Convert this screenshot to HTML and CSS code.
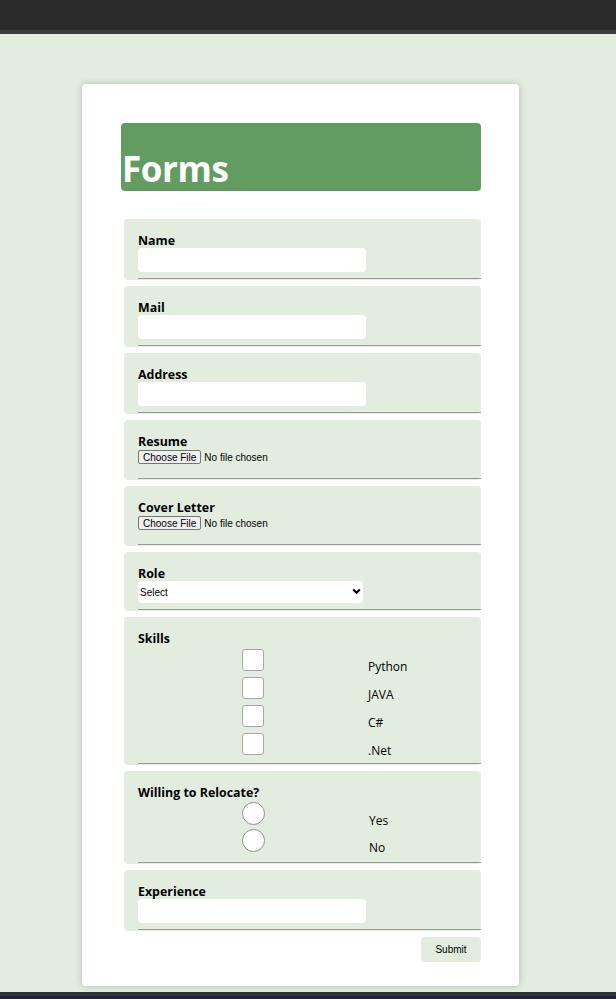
FILE: index.html
```html
<!DOCTYPE html>
<html lang="en">
<head>
<meta charset="utf-8">
<title>Forms</title>
<link rel="stylesheet" href="styles.css">
</head>
<body>
<div class="topbar"></div>
<div class="topstripe"></div>
<main class="page">
  <div class="card">
    <header class="banner"><h1>Forms</h1></header>
    <form class="form">
      <section class="box">
        <div class="field">
          <label class="lbl">Name</label>
          <input class="text" type="text">
        </div>
      </section>
      <section class="box">
        <div class="field">
          <label class="lbl">Mail</label>
          <input class="text" type="text">
        </div>
      </section>
      <section class="box">
        <div class="field">
          <label class="lbl">Address</label>
          <input class="text" type="text">
        </div>
      </section>
      <section class="box">
        <div class="field field-file">
          <label class="lbl">Resume</label>
          <input class="file" type="file">
        </div>
      </section>
      <section class="box">
        <div class="field field-file">
          <label class="lbl">Cover Letter</label>
          <input class="file" type="file">
        </div>
      </section>
      <section class="box">
        <div class="field">
          <label class="lbl">Role</label>
          <div class="select-wrap">
            <select class="select"><option>Select</option></select>
            <svg class="chev" width="9" height="7" viewBox="0 0 9 7"><path d="M1.2 1.5 L4.5 4.8 L7.8 1.5" fill="none" stroke="#000" stroke-width="2.2"/></svg>
          </div>
        </div>
      </section>
      <section class="box">
        <div class="field field-checks">
          <label class="lbl">Skills</label>
          <div class="choices">
            <span class="cell"><input class="check" type="checkbox"></span><span class="opt">Python</span>
            <span class="cell"><input class="check" type="checkbox"></span><span class="opt">JAVA</span>
            <span class="cell"><input class="check" type="checkbox"></span><span class="opt">C#</span>
            <span class="cell"><input class="check" type="checkbox"></span><span class="opt">.Net</span>
          </div>
        </div>
      </section>
      <section class="box">
        <div class="field field-radios">
          <label class="lbl">Willing to Relocate?</label>
          <div class="choices radios">
            <span class="cell"><input class="radio" type="radio" name="r"></span><span class="opt">Yes</span>
            <span class="cell"><input class="radio" type="radio" name="r"></span><span class="opt">No</span>
          </div>
        </div>
      </section>
      <section class="box">
        <div class="field">
          <label class="lbl">Experience</label>
          <input class="text" type="text">
        </div>
      </section>
      <div class="actions"><button class="submit" type="button">Submit</button></div>
    </form>
  </div>
</main>
<div class="botstripe"></div>
<div class="botbar"></div>
</body>
</html>
```
FILE: styles.css
```css
html, body {
  margin: 0;
  padding: 0;
  height: 999px;
  overflow: hidden;
}
body {
  font-family: "Open Sans", "DejaVu Sans", sans-serif;
  background: #e2ede0;
}
.topbar { height: 30px; background: #2b2b2b; }
.topstripe { height: 4px; background: #3b3b3b; }
.page {
  height: 958px;
  box-sizing: border-box;
  padding-top: 50px;
  background: #e2ede0;
}
.card {
  margin-left: 82px;
  width: 437px;
  height: 902px;
  box-sizing: border-box;
  padding: 39px 38px 0 39px;
  background: #fff;
  border-radius: 4px;
  box-shadow: 0 0 7px rgba(0, 0, 0, 0.22);
}
.banner {
  height: 68px;
  background: #639c61;
  border-radius: 4px;
  display: flex;
  align-items: flex-end;
}
.banner h1 {
  margin: 0 0 4px 1px;
  font-size: 35px;
  line-height: 36px;
  letter-spacing: -0.4px;
  font-weight: 700;
  color: #fff;
}
.form {
  margin: 28px 0 0 3px;
  display: flex;
  flex-direction: column;
  gap: 6px;
}
.box {
  background: #e2ede0;
  border-radius: 4px;
  padding: 14px 0 1px 14px;
}
.field {
  box-sizing: border-box;
  padding-bottom: 6px;
  border-bottom: 1px solid #9a9a9a;
  display: flex;
  flex-direction: column;
  align-items: flex-start;
}
.field-file { min-height: 45px; }
.field-checks { padding-bottom: 5px; }
.field-radios { padding-bottom: 8px; }
.lbl {
  display: block;
  font-size: 12.4px;
  line-height: 15px;
  font-weight: 700;
  color: #000;
}
.text {
  width: 228px;
  height: 24px;
  box-sizing: border-box;
  border: none;
  border-radius: 4px;
  background: #fff;
  margin: 0;
  padding: 0 6px;
}
.file {
  margin: 0;
  font-family: "Liberation Sans", Arial, sans-serif;
  font-size: 10px;
  color: #000;
  height: 15px;
}
.file::file-selector-button {
  font-family: "Liberation Sans", Arial, sans-serif;
  font-size: 10px;
  height: 14px;
  padding: 0 4px;
  margin: 1px 3px 0 0;
  border: 1px solid #767676;
  border-radius: 2px;
  background: #efefef;
  color: #000;
}
.select-wrap {
  position: relative;
  width: 225px;
  height: 22px;
}
.select {
  display: block;
  -webkit-appearance: none;
  appearance: none;
  width: 225px;
  height: 22px;
  margin: 0;
  border: none;
  border-radius: 4px;
  background: #fff;
  font-family: "Liberation Sans", Arial, sans-serif;
  font-size: 10px;
  color: #000;
  padding: 0 0 0 2px;
}
.chev {
  position: absolute;
  right: 2px;
  top: 7px;
  pointer-events: none;
}
.choices {
  display: grid;
  grid-template-columns: 230px 1fr;
  grid-auto-rows: 28px;
  width: 100%;
}
.radios { grid-auto-rows: 27px; }
.cell {
  display: flex;
  justify-content: center;
  align-items: flex-start;
  padding-top: 3px;
}
.radios .cell { padding-top: 2px; }
.opt {
  font-size: 12px;
  line-height: 16px;
  padding-top: 13px;
  color: #000;
}
.radios .opt { padding-left: 1px; }
.check, .radio {
  -webkit-appearance: none;
  appearance: none;
  margin: 0;
  width: 22px;
  height: 22px;
  box-sizing: border-box;
  background: #fff;
  border: 1px solid #a6a6a6;
}
.check { border-radius: 3px; }
.radio {
  width: 23px;
  height: 23px;
  border-radius: 50%;
  border-color: #8f8f8f;
}
.actions {
  display: flex;
  justify-content: flex-end;
}
.submit {
  width: 60px;
  height: 25px;
  border: none;
  border-radius: 4px;
  background: #e2ede0;
  font-family: "Liberation Sans", Arial, sans-serif;
  font-size: 10px;
  color: #000;
  padding: 0;
}
.botstripe { height: 4px; background: #333; }
.botbar { height: 3px; background: #1b2450; }
```
